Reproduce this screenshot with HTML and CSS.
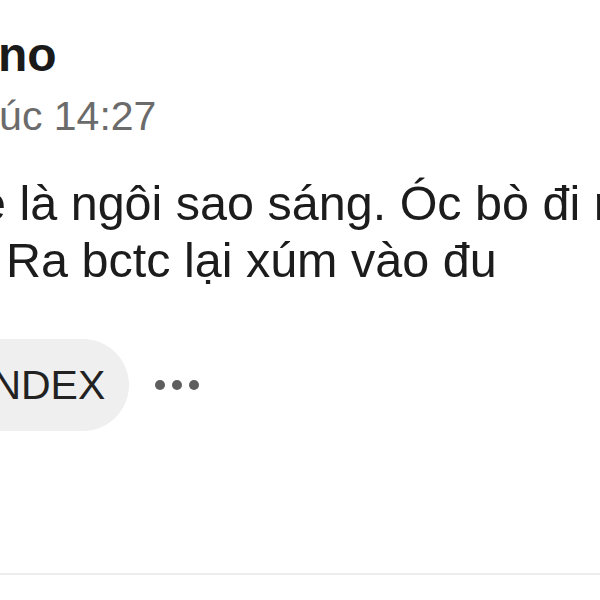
FILE: index.html
```html
<!DOCTYPE html>
<html lang="vi">
<head>
<meta charset="utf-8">
<link rel="stylesheet" href="styles.css">
</head>
<body>
<article class="post">
  <header class="post-head">
    <div class="author">no</div>
    <div class="time">lúc 14:27</div>
  </header>
  <div class="content">
    <div class="line line-1">e là ngôi sao sáng. Óc bò đi r</div>
    <div class="line line-2">Ra bctc lại xúm vào đu</div>
  </div>
  <div class="actions">
    <span class="tag">INDEX</span>
    <span class="more"><i></i><i></i><i></i></span>
  </div>
  <hr class="divider">
</article>
</body>
</html>
```
FILE: styles.css
```css
html, body {
  margin: 0;
  padding: 0;
  background: #ffffff;
  overflow: hidden;
}
body {
  width: 600px;
  height: 600px;
  font-family: "Liberation Sans", Arial, sans-serif;
  color: #1c1c1c;
}
.post {
  display: flex;
  flex-direction: column;
  white-space: nowrap;
}
.post-head {
  padding-top: 27px;
}
.author {
  font-size: 48px;
  line-height: 56px;
  font-weight: 700;
  color: #1a1a1a;
  text-indent: -2px;
}
.time {
  margin-top: 9px;
  font-size: 41px;
  line-height: 48px;
  color: #6b6b6b;
  text-indent: -10px;
}
.content {
  margin-top: 35px;
  font-size: 48.5px;
  line-height: 57px;
  color: #1c1c1c;
}
.line-1 { text-indent: -21px; }
.line-2 { text-indent: 6px; }
.actions {
  margin-top: 50px;
  display: flex;
  align-items: center;
  gap: 26px;
}
.tag {
  display: flex;
  align-items: center;
  height: 92px;
  margin-left: -48px;
  padding: 0 24px 0 28px;
  border-radius: 46px;
  background: #efefef;
  font-size: 41px;
  color: #222;
}
.more {
  display: flex;
  gap: 7px;
}
.more i {
  width: 10px;
  height: 10px;
  border-radius: 50%;
  background: #5e5e5e;
}
.divider {
  margin: 142px 0 0;
  border: 0;
  height: 2px;
  background: #ededed;
}
```
